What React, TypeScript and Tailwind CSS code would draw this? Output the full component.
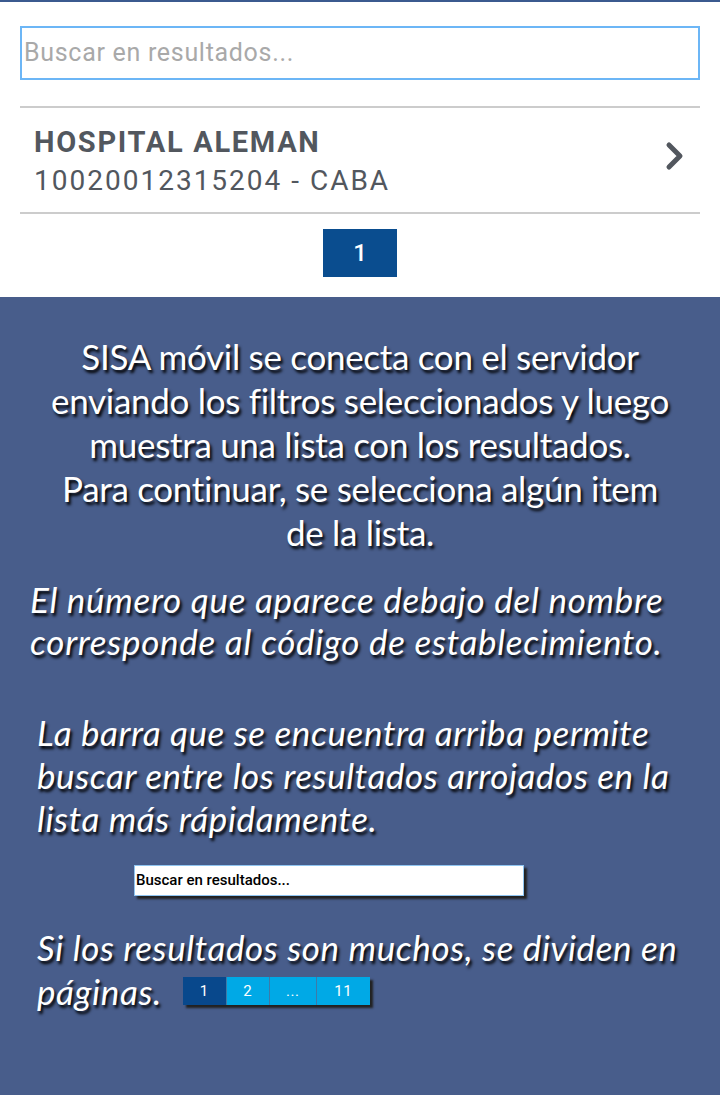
export default function App() {
  const shadow = "[text-shadow:2px_3px_3px_#000]";
  return (
    <div className="w-[720px] h-[1095px] flex flex-col bg-white font-['Roboto',sans-serif]">
      {/* App area */}
      <div className="border-t-2 border-[#3b5a8f] px-5 pt-6">
        <div className="h-[54px] border-2 border-[#6cb6f6] flex items-center px-[2px]">
          <span className="text-[25px] text-[#a9a9a9] tracking-[0.7px]">Buscar en resultados...</span>
        </div>
        <div className="mt-[26px] border-t-2 border-[#cccccc]" />
        <div className="flex items-center justify-between pl-[14px] pr-[14px] pt-[4px] h-[104px]">
          <div className="flex flex-col">
            <span className="text-[29px] font-bold text-[#52575e] leading-[38px] tracking-[1.7px]">HOSPITAL ALEMAN</span>
            <span className="text-[28px] text-[#52575e] leading-[40px] tracking-[2px]">10020012315204 - CABA</span>
          </div>
          <svg width="22" height="30" viewBox="0 0 22 30" className="mt-[-12px]">
            <path d="M5 4 L16 15 L5 26" stroke="#52575e" strokeWidth="5" fill="none" strokeLinecap="round" strokeLinejoin="round" />
          </svg>
        </div>
        <div className="border-t-2 border-[#cccccc]" />
        <div className="flex justify-center pt-[15px] pb-[20px]">
          <div className="w-[74px] h-[48px] bg-[#0a4d8f] flex items-center justify-center text-white text-[24px] font-medium">1</div>
        </div>
      </div>

      {/* Help overlay */}
      <div className={`flex-1 bg-[#485d8b] text-white font-['Lato',sans-serif] ${shadow}`}>
        <div className="pt-[37px] text-center text-[35px] leading-[44px] tracking-[-0.3px]">
          <div>SISA móvil se conecta con el servidor</div>
          <div>enviando los filtros seleccionados y luego</div>
          <div>muestra una lista con los resultados.</div>
          <div>Para continuar, se selecciona algún item</div>
          <div>de la lista.</div>
        </div>
        <div className="mt-[24px] pl-[30px] italic text-[35px] leading-[42px] tracking-[0.7px]">
          <div>El número que aparece debajo del nombre</div>
          <div>corresponde al código de establecimiento.</div>
        </div>
        <div className="mt-[49px] pl-[37px] italic text-[35px] leading-[43px] tracking-[0.6px]">
          <div>La barra que se encuentra arriba permite</div>
          <div>buscar entre los resultados arrojados en la</div>
          <div>lista más rápidamente.</div>
        </div>
        <div className="mt-[25px] pl-[134px]">
          <div className="w-[390px] h-[31px] bg-white border border-[#8fc4f0] shadow-[3px_3px_2px_#222] flex items-center px-[1px] [text-shadow:none]">
            <span className="text-[15px] text-black font-['Roboto',sans-serif] font-medium">Buscar en resultados...</span>
          </div>
        </div>
        <div className="mt-[29px] pl-[37px] italic text-[35px] leading-[44px] tracking-[0.6px]">
          <div>Si los resultados son muchos, se dividen en</div>
          <div className="flex items-center">
            <span>páginas.</span>
            <div className="ml-[21px] flex shadow-[3px_3px_2px_#222] not-italic font-['Roboto',sans-serif] text-[15px] leading-none [text-shadow:none]">
              <div className="w-[44px] h-[28px] bg-[#08488c] flex items-center justify-center border-r border-[#3d7aa8]">1</div>
              <div className="w-[43px] h-[28px] bg-[#00a9e6] flex items-center justify-center border-r border-[#3d7aa8]">2</div>
              <div className="w-[47px] h-[28px] bg-[#00a9e6] flex items-center justify-center border-r border-[#3d7aa8]">...</div>
              <div className="w-[53px] h-[28px] bg-[#00a9e6] flex items-center justify-center">11</div>
            </div>
          </div>
        </div>
      </div>
    </div>
  );
}
